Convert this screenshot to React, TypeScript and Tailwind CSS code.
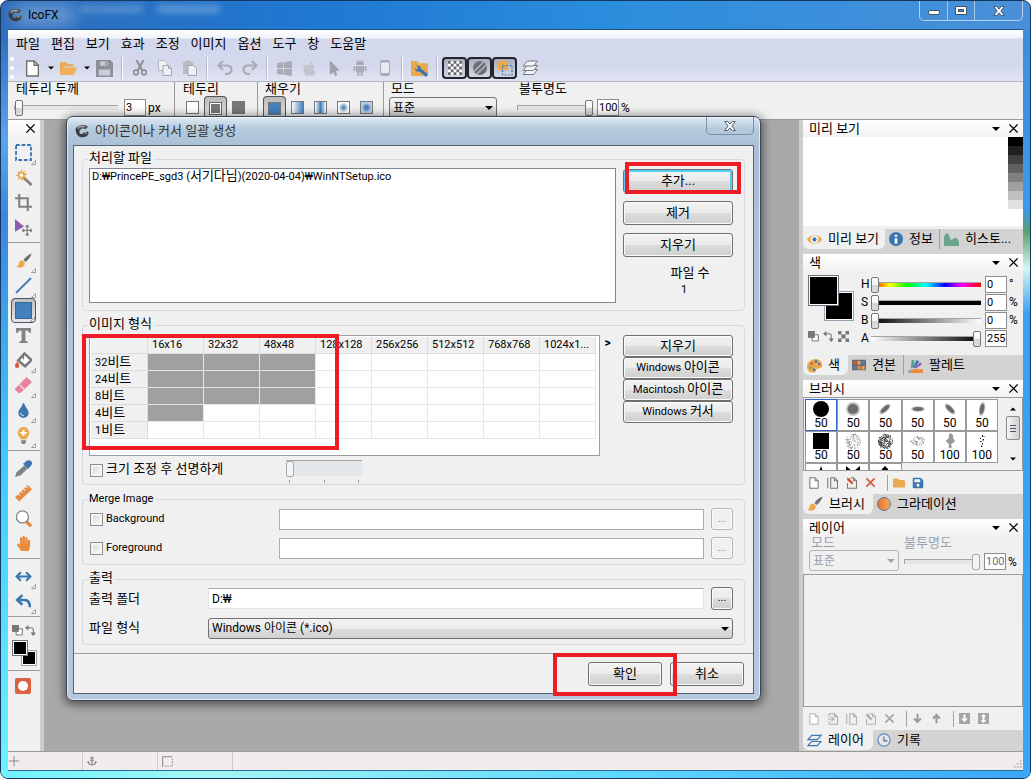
import React from 'react';
import clsx from 'clsx';
import {
  FaAnchor,
  FaApple,
  FaFolder,
  FaHandPaper,
  FaMousePointer,
  FaSave,
  FaTint,
  FaWindows,
} from 'react-icons/fa';

type Children = { children?: React.ReactNode };

// Korean glyphs run one step larger than the Latin ones
const K = ({ children }: Children) => <span className="text-[13px] leading-none">{children}</span>;

const Svg = ({ size = 16, className, children }: { size?: number; className?: string } & Children) => (
  <svg width={size} height={size} viewBox="0 0 16 16" fill="none" className={clsx('shrink-0', className)} aria-hidden>
    {children}
  </svg>
);

/* ---------- icons ---------- */

const Logo = () => (
  <Svg size={14}>
    <path d="M1 4C0 9 2 14 7 15c4 .8 7.500-1 8.500-4.500l-.5-2-5.500 1.500c-.5 2-3 2-4 .5C4.500 8.500 5 6 7.500 5z" fill="#3a3d41" />
    <path d="M1.500 5C4 1 10 0 15 3L12 6C10 4.500 7 4.500 5.500 7.500z" fill="#4f5358" />
    <path d="M3 4.500C5 2 9 1.500 12 2.800L9 4C7 3.500 5 4 3.500 6z" fill="#a7adb3" />
    <path d="M9.500 9.500L14 8.500l-.5 2.500c-1.500.8-3 .5-4-1.500z" fill="#7b8087" />
  </Svg>
);

const NewDoc = ({ size = 16, color = '#6e6e6e' }: { size?: number; color?: string }) => (
  <Svg size={size}>
    <path d="M2.500 1h7l4 4v10h-11z" fill="#fff" stroke={color} strokeWidth="1.300" />
    <path d="M9.500 1v4h4" stroke={color} strokeWidth="1.300" />
  </Svg>
);

const DupDoc = ({ size = 12, color = '#777' }: { size?: number; color?: string }) => (
  <Svg size={size}>
    <path d="M1 1v14M5 1h5l4 4v10H5zM10 1v4h4" stroke={color} strokeWidth="1.400" />
  </Svg>
);

const EditDoc = ({ size = 12, color = '#777', accent = '#d9583b' }: { size?: number; color?: string; accent?: string }) => (
  <Svg size={size}>
    <path d="M6 1h4l4 4v10H2V8M10 1v4h4" stroke={color} strokeWidth="1.400" />
    <path d="M1 1l3.500.8L10 8l-2 2-6-5.500z" fill={accent} />
  </Svg>
);

const ImportDoc = () => (
  <Svg size={12}>
    <path d="M3 5V1h7l4 4v10H3v-4M10 1v4h4M1 8h8M6 5l3 3-3 3" stroke="#b0b0b0" strokeWidth="1.500" />
  </Svg>
);

const Cross = ({ size = 11, color = '#000', width = 2 }: { size?: number; color?: string; width?: number }) => (
  <Svg size={size}>
    <path d="M2 2l12 12M14 2L2 14" stroke={color} strokeWidth={width} />
  </Svg>
);

const OpenFolder = () => (
  <Svg size={17}>
    <path d="M0 14V2h6l1.500 2H13v2H4z" fill="#e8a94f" />
    <path d="M3.500 7H16l-3 7H.5z" fill="#eeb15a" />
  </Svg>
);

const Floppy = () => (
  <Svg size={17}>
    <path d="M0 0h13.500L16 2.500V16H0z" fill="#8d8f96" />
    <path d="M4 1.500h7v4H4zM2.500 9h11v5.500h-11z" fill="#c9ccda" />
    <path d="M8.500 2h1.500v3H8.500z" fill="#8d8f96" />
  </Svg>
);

const Scissors = () => (
  <Svg>
    <path d="M4.500 0l6 11M11.500 0l-6 11" stroke="#8f9094" strokeWidth="2" />
    <circle cx="4" cy="12.500" r="2.300" stroke="#8f9094" strokeWidth="1.700" />
    <circle cx="12" cy="12.500" r="2.300" stroke="#8f9094" strokeWidth="1.700" />
  </Svg>
);

const Copy = () => (
  <Svg>
    <path d="M1.500.5h6l3 3v7h-9z" fill="#eef0f6" stroke="#b3b6bf" />
    <path d="M6 5.500h5.500l3 3v7H6z" fill="#eef0f6" stroke="#a2a5ad" />
    <path d="M11.500 5.500v3h3" stroke="#a2a5ad" />
  </Svg>
);

const Paste = () => (
  <Svg>
    <path d="M1 2h2V.5h6V2h2v12H1z" fill="#b9bbc2" />
    <path d="M6 5.500h5.500l3 3v7H6z" fill="#eef0f6" stroke="#a2a5ad" />
  </Svg>
);

const Undo = ({ flip = false }: { flip?: boolean }) => (
  <Svg className={flip ? '-scale-x-100' : undefined}>
    <path d="M6 1L1.500 5.500 6 10M2 5.500h7.500c3 0 5 1.500 5 4s-2 4.500-5 4.500H8" stroke="#a8abb5" strokeWidth="2.200" />
  </Svg>
);

const Android = () => (
  <Svg>
    <path d="M4 5a4 4 0 018 0zM4 6h8v6.500H4zM1.500 6h1.800v5H1.500zM12.700 6h1.800v5h-1.800zM5.500 12.500h1.800V16H5.500zM8.700 12.500h1.800V16H8.700z" fill="#a8abb5" />
    <path d="M5 0l1.300 2M11 0L9.700 2" stroke="#a8abb5" />
  </Svg>
);

const Wrench = () => (
  <Svg size={17}>
    <path d="M0 1h6l1 2h9v12H0z" fill="#e8a94f" />
    <path d="M5 5.500c2-.8 4 0 4.300 2.500L16 13.500 14 16 8 10.800c-2.300.6-4.300-.6-4.500-3l2 1.200L7 7.500z" fill="#3b76b0" />
  </Svg>
);

const Checker = () => (
  <Svg size={14}>
    <rect width="16" height="16" fill="#fff" />
    <path d="M0 0h3.200v3.200H0zM6.400 0h3.200v3.200H6.400zM12.800 0H16v3.200h-3.200zM3.200 3.200h3.200v3.200H3.200zM9.600 3.200h3.200v3.200H9.600zM0 6.400h3.200v3.200H0zM6.400 6.400h3.200v3.200H6.400zM12.800 6.400H16v3.200h-3.200zM3.200 9.600h3.200v3.200H3.200zM9.600 9.600h3.200v3.200H9.600zM0 12.800h3.200V16H0zM6.400 12.800h3.200V16H6.400zM12.800 12.800H16V16h-3.200z" fill="#696b70" />
  </Svg>
);

const Hatch = () => (
  <Svg>
    <circle cx="8" cy="8" r="7" fill="#6d6f75" />
    <path d="M1 12.500L12.500 1M4 15L15 4" stroke="#b6bac6" strokeWidth="1.300" />
  </Svg>
);

const Overlap = () => (
  <Svg>
    <rect x="1" y="1" width="10" height="9" fill="#e8a94f" />
    <rect x="5.500" y="5.500" width="9.500" height="9.500" stroke="#3b76b0" strokeWidth="1.200" strokeDasharray="2 1.500" />
  </Svg>
);

const Stack = () => (
  <Svg>
    <path d="M5.500 9.500h10l-4 5H1z" fill="#f4f5fa" stroke="#77797f" />
    <path d="M5.500 5.500h10l-4 5H1z" fill="#f4f5fa" stroke="#77797f" />
    <path d="M5.500 1h10l-4 5H1z" fill="#f4f5fa" stroke="#77797f" />
  </Svg>
);

const Layers = ({ color }: { color: string }) => (
  <Svg size={15}>
    <path d="M5 2.500h10L11 7H1zM5 9h10l-4 4.500H1z" stroke={color} strokeWidth="1.200" />
  </Svg>
);

const Brush = () => (
  <Svg>
    <path d="M15.500.5c-3 .8-6.500 4-8 6.500l2 2C12 7.500 15 3.500 15.500.5z" fill="#6f7175" />
    <path d="M6.500 7.500c-3-.5-3.500 2-4 4C2 13 1 13.500 0 13.500c3 2 8 1.500 8.800-2.500.2-1.500-1-3-2.300-3.500z" fill="#e8a94f" />
  </Svg>
);

const Palette = () => (
  <Svg size={15}>
    <path d="M9 1C4 1 0 5 0 9.500 0 14 4 16 8 15.500c2-.3 1-3 2.500-4s5 .5 5.500-3C16.500 4 13 1 9 1z" fill="#e8a94f" />
    <circle cx="5" cy="6" r="1.500" fill="#d9583b" />
    <circle cx="9.500" cy="3.800" r="1.500" fill="#3b76b0" />
    <circle cx="13" cy="6.500" r="1.400" fill="#8a5fae" />
    <circle cx="3.800" cy="10.500" r="1.500" fill="#6aa58c" />
    <circle cx="7.500" cy="12.500" r="1.300" fill="#3b76b0" />
  </Svg>
);

const Defaults = () => (
  <Svg size={11}>
    <path d="M6 5.500h9v9H6z" fill="#fff" stroke="#707070" strokeWidth="1.400" />
    <path d="M0 0h10v10H0z" fill="#777" />
  </Svg>
);

const Swap = () => (
  <Svg size={11}>
    <path d="M5 0v8L0 4zM8 11h8l-4 5z" fill="#777" />
    <path d="M4 4h5c2 0 3 1 3 3v5" stroke="#777" strokeWidth="1.500" />
  </Svg>
);

const MiniChecker = () => (
  <Svg size={11}>
    <path d="M0 0h5v5H0zM11 0h5v5h-5zM5 5h6v6H5zM0 11h5v5H0zM11 11h5v5h-5z" fill="#777" />
  </Svg>
);

const Arrow = ({ up = false }: { up?: boolean }) => (
  <Svg size={11} className={up ? 'rotate-180' : undefined}>
    <path d="M8 1v12M3 8l5 5 5-5" stroke="#9b9b9b" strokeWidth="3" />
  </Svg>
);

const MergeBox = ({ both = false }: { both?: boolean }) => (
  <Svg size={11}>
    <path d="M0 0h16v16H0z" fill="#a5a5a5" />
    <path d={both ? 'M8 1l4 4.500H9.500v5H12L8 15l-4-4.500h2.500v-5H4z' : 'M6.500 2h3v6H13l-5 5.500L3 8h3.500z'} fill="#fff" />
  </Svg>
);

/* ---------- left tool strip ---------- */

const toolIcons: Record<string, React.ReactNode> = {
  marquee: (
    <Svg size={17}>
      <rect x="1" y="1" width="14" height="14" stroke="#3b76b0" strokeWidth="1.800" strokeDasharray="3.500 1.700" />
    </Svg>
  ),
  wand: (
    <Svg size={17}>
      <path d="M6.500 6.500L15.500 15" stroke="#808285" strokeWidth="2.600" />
      <path d="M6 0l1 3 2.500-2-.8 3L12 4.500 9 6.500 11.500 9 8 8.500 6.500 12l-1-3.500L2.500 10l1-3L0 6l3.500-1L2 2l3 1z" fill="#e8a94f" />
      <circle cx="6" cy="5.800" r="1.600" fill="#fff" />
    </Svg>
  ),
  crop: (
    <Svg size={17}>
      <path d="M4 0v12h12M0 4h12v12" stroke="#808285" strokeWidth="2" />
    </Svg>
  ),
  move: (
    <Svg size={17}>
      <path d="M0 0l8.500 7L0 12z" fill="#8a5fae" />
      <path d="M11.500 6v9.500M7 10.800h9M10 7.500L11.500 6 13 7.500M10 14l1.500 1.500L13 14M8.500 9.300L7 10.800l1.500 1.500M14.500 9.300l1.500 1.500-1.500 1.500" stroke="#808285" strokeWidth="1.200" />
    </Svg>
  ),
  brush: <Brush />,
  line: (
    <Svg size={17}>
      <path d="M1 15L15 1" stroke="#3b76b0" strokeWidth="1.800" />
    </Svg>
  ),
  rect: (
    <Svg size={17}>
      <rect x=".5" y=".5" width="15" height="15" fill="#4480bb" stroke="#34689c" />
    </Svg>
  ),
  text: (
    <Svg size={17}>
      <path d="M1 1h14v4.500h-2L12.500 3.500H9.800V13l2.200.8V15H4v-1.200l2.200-.8V3.500H3.500L3 5.500H1z" fill="#808285" />
    </Svg>
  ),
  bucket: (
    <Svg size={17}>
      <path d="M9 1.500l6.500 6-6 6L3 8z" fill="#fff" stroke="#77797c" strokeWidth="2.400" />
      <path d="M8 1v6" stroke="#77797c" strokeWidth="1.200" />
      <path d="M2 9c1.500 2 2 3 2 4.200A2 2 0 010 13c0-1.200 1-2.500 2-4z" fill="#d9583b" />
    </Svg>
  ),
  eraser: (
    <Svg size={17}>
      <path d="M0 11L11 0l5 5L5 15H3.500L0 12z" fill="#e8829b" />
      <path d="M4 7l5 5" stroke="#f7d4dc" strokeWidth="1.200" />
    </Svg>
  ),
  blur: <FaTint size={15} color="#3b76b0" />,
  dodge: (
    <Svg size={17}>
      <path d="M8 0a5.500 5.500 0 00-3 10v1.500h6V10A5.500 5.500 0 008 0z" fill="#e8a94f" />
      <path d="M8 2.500v6M5 5.500h6" stroke="#fff" strokeWidth="1.800" />
      <path d="M5.500 12.500h5L9.500 16h-3z" fill="#808285" />
    </Svg>
  ),
  picker: (
    <Svg size={17}>
      <path d="M9 5l3 3-7 6.500-5 1.500 1.500-4.500z" fill="#808285" />
      <path d="M7.500 3.500l5 5 1-1.500C16 5 17 2.500 15 1s-4-.5-5.500 1z" fill="#3b76b0" />
    </Svg>
  ),
  ruler: (
    <Svg size={17}>
      <path d="M0 11.500L12 0l4 4L4 15.500z" fill="#e88b3e" />
      <path d="M3 8.500l1.500 1.500M5.500 6L7 7.500M8 3.800l1.500 1.500M10.500 1.500L12 3" stroke="#f0f0f0" />
    </Svg>
  ),
  zoom: (
    <Svg size={17}>
      <path d="M10.500 10.500l4.500 5" stroke="#e88b3e" strokeWidth="3.200" />
      <circle cx="7" cy="6.500" r="5.700" fill="#fff" stroke="#808285" strokeWidth="1.200" />
    </Svg>
  ),
  hand: <FaHandPaper size={15} color="#e88b3e" />,
  flip: (
    <Svg size={17}>
      <path d="M2 8h12M5.500 4L1.500 8l4 4M10.500 4l4 4-4 4" stroke="#3b76b0" strokeWidth="2" />
    </Svg>
  ),
  rotate: (
    <Svg size={17}>
      <path d="M7 2L2 6.500 7 11M2 6.500h7c3.500 0 5 2 5 7" stroke="#3b76b0" strokeWidth="2.400" />
    </Svg>
  ),
};

const toolGroups = [
  [['marquee', true], ['wand'], ['crop'], ['move']],
  [['brush', true], ['line', true], ['rect', true], ['text'], ['bucket', true], ['eraser', true], ['blur', true], ['dodge', true]],
  [['picker'], ['ruler'], ['zoom'], ['hand']],
  [['flip', true], ['rotate', true]],
] as [string, boolean?][][];

const ToolSep = () => (
  <div className="h-2 pt-0.5">
    <div className="h-px bg-[#9c9c9c]" />
  </div>
);

const Swatches = ({ big = false }: { big?: boolean }) => (
  <div className={clsx('relative shrink-0', big ? 'size-[46px]' : 'h-[26px] w-[25px]')}>
    <div className={clsx('absolute right-0 bottom-0 border border-gray-400 bg-white p-px', big ? 'size-[30px]' : 'size-4')}>
      <div className="size-full bg-black" />
    </div>
    <div className={clsx('absolute top-0 left-0 border border-gray-500 bg-white p-px', big ? 'size-[31px]' : 'size-4')}>
      <div className="size-full bg-black" />
    </div>
  </div>
);

const ToolStrip = () => (
  <div className="w-9 shrink-0 border-r-4 border-[#cdcdcd] bg-[#f0f0f0]">
    <div className="flex h-5 items-center justify-end bg-linear-to-b from-white to-[#f0f0f0] pr-1 pb-1">
      <button aria-label="닫기"><Cross /></button>
    </div>
    {toolGroups.map((group, i) => (
      <div key={i}>
        {group.map(([name, more]) => (
          <button
            key={name}
            aria-label={name}
            className={clsx(
              'relative mx-[3px] flex h-[25px] w-[25px] items-center justify-center',
              name === 'rect' && 'rounded border border-gray-600 bg-linear-to-b from-[#bfbfbf] to-[#e8e8e8]',
            )}
          >
            {toolIcons[name]}
            {more && (
              <svg width="5" height="5" viewBox="0 0 5 5" className="absolute right-0 bottom-0">
                <path d="M4.500.5v4h-4z" fill="#fff" stroke="#888" strokeWidth=".8" />
              </svg>
            )}
          </button>
        ))}
        <ToolSep />
      </div>
    ))}
    <div className="flex h-4 items-center justify-between px-1">
      <button aria-label="기본 색"><Defaults /></button>
      <button aria-label="색 전환"><Swap /></button>
    </div>
    <div className="px-1 py-0.5"><Swatches /></div>
    <ToolSep />
    <button aria-label="마스크" className="mx-[7px] mt-0.5 flex size-4 items-center justify-center rounded-xs bg-[#d9613f]">
      <span className="size-2.5 rounded-full bg-white" />
    </button>
  </div>
);

/* ---------- shared controls ---------- */

const btn =
  'flex items-center justify-center rounded-[3px] border border-[#707070] bg-[linear-gradient(#f2f2f2,#ebebeb_50%,#dddddd_50%,#cfcfcf)] text-black inset-shadow-[0_0_0_1px_#fafafa] disabled:border-[#b5b5b5] disabled:bg-none disabled:text-[#8c8c8c]';

const thumb =
  '[&::-webkit-slider-thumb]:appearance-none [&::-webkit-slider-thumb]:w-2 [&::-webkit-slider-thumb]:h-4 [&::-webkit-slider-thumb]:-mt-[6px] [&::-webkit-slider-thumb]:rounded-[2px] [&::-webkit-slider-thumb]:border [&::-webkit-slider-thumb]:border-[#777] [&::-webkit-slider-thumb]:bg-[linear-gradient(#fff,#f4f4f4_50%,#d5d5d5_50%,#dcdcdc)] disabled:[&::-webkit-slider-thumb]:border-[#aaa] disabled:[&::-webkit-slider-thumb]:bg-none disabled:[&::-webkit-slider-thumb]:bg-[#f4f4f4]';

const track =
  '[&::-webkit-slider-runnable-track]:h-[5px] [&::-webkit-slider-runnable-track]:border-t [&::-webkit-slider-runnable-track]:border-[#a5a5a5]';

const plainTrack = '[&::-webkit-slider-runnable-track]:border-l [&::-webkit-slider-runnable-track]:bg-[#e4e6e8]';

const Slider = ({ label, className, ...rest }: { label: string } & React.InputHTMLAttributes<HTMLInputElement>) => (
  <input type="range" aria-label={label} className={clsx('m-0 h-4 appearance-none bg-transparent', thumb, track, className)} {...rest} />
);

const Num = ({ label, value, disabled }: { label: string; value: string; disabled?: boolean }) => (
  <input
    aria-label={label}
    defaultValue={value}
    disabled={disabled}
    className="h-[17px] w-[22px] shrink-0 border border-[#8d8d8d] bg-white pl-px text-[11px] disabled:text-gray-500"
  />
);

const Caret = ({ className }: { className?: string }) => (
  <svg width="8" height="4" viewBox="0 0 8 4" className={clsx('shrink-0', className)} aria-hidden>
    <path d="M0 0h8L4 4z" fill="currentColor" />
  </svg>
);

const Select = ({ value, className, disabled, id, label }: { value: string; className?: string; disabled?: boolean; id?: string; label?: string }) => (
  <div className={clsx('relative', className, disabled && 'text-gray-400')}>
    <select
      id={id}
      aria-label={label}
      disabled={disabled}
      className={clsx(
        'h-[21px] w-full appearance-none rounded-[3px] border pr-5 pl-[3px] text-xs',
        disabled ? 'border-[#b5b5b5]' : 'border-[#707070] bg-[linear-gradient(#f2f2f2,#ebebeb_50%,#dddddd_50%,#d2d2d2)]',
      )}
    >
      <option>{value}</option>
    </select>
    <Caret className="pointer-events-none absolute top-[9px] right-1" />
  </div>
);

/* ---------- top bars ---------- */

const WinX = () => (
  <Svg size={12}>
    <path d="M1 2h4l3 3.500L11 2h4l-4.500 6 4.500 6h-4l-3-3.500L5 14H1l4.500-6z" fill="#fff" stroke="#44505e" strokeWidth="1.200" />
  </Svg>
);

const TitleBar = () => (
  <header className="relative flex h-7 shrink-0 items-center text-xs">
    <div className="absolute top-1 left-[72px] h-2 w-16 rounded-full bg-white/20 blur-[3px]" />
    <div className="absolute top-1 left-[148px] h-2 w-16 rounded-full bg-white/25 blur-[3px]" />
    <div className="absolute top-1 left-1 h-5 w-16 rounded-full bg-white/30 blur-sm" />
    <div className="relative flex items-center gap-1.5">
      <Logo />
      <h1 className="text-black">IcoFX</h1>
    </div>
    <div className="ml-auto flex h-5 self-start rounded-b-[5px] border border-t-0 border-white/60">
      <button aria-label="최소화" className="flex w-7 items-center justify-center border-r border-white/50 pt-1">
        <span className="h-[5px] w-3 rounded-xs border border-[#44505e] bg-white" />
      </button>
      <button aria-label="최대화" className="flex w-[27px] items-center justify-center border-r border-white/50">
        <span className="flex h-[9px] w-3 items-center justify-center border border-[#44505e] bg-white">
          <span className="h-[3px] w-1.5 border border-[#44505e] bg-[#3f8fd9]" />
        </span>
      </button>
      <button aria-label="닫기" className="flex w-[47px] items-center justify-center"><WinX /></button>
    </div>
  </header>
);

const menus = ['파일', '편집', '보기', '효과', '조정', '이미지', '옵션', '도구', '창', '도움말'];

const BarSep = () => (
  <div className="flex w-2.5 shrink-0 justify-center">
    <div className="h-[22px] w-0.5 border-l border-[#b4b8c8] bg-white" />
  </div>
);

const BarBtn = ({ label, on, children }: { label: string; on?: boolean } & Children) => (
  <button
    aria-label={label}
    className={clsx(
      'flex h-[22px] w-[25px] shrink-0 items-center justify-center',
      on && 'rounded border-2 border-[#22252b] bg-linear-to-b from-[#a9aebd] to-[#d3d8e6]',
    )}
  >
    {children}
  </button>
);

const MenuAndToolbar = () => (
  <div className="h-[53px] shrink-0 border-t border-b border-t-[#1c4f86] border-b-[#b2b5be] bg-[linear-gradient(#ffffff,#eff2f8_8px,#d4d8ec_9px,#d4d8ec_36px,#dfe4f2)]">
    <nav className="flex h-[27px] items-center gap-[11px] px-2 text-[13px]">
      {menus.map((m) => (
        <button key={m}>{m}</button>
      ))}
    </nav>
    <div className="flex h-[22px] items-center pl-0.5">
      <div className="mr-1.5 h-[22px] border-l-4 border-dotted border-white" />
      <BarBtn label="새로 만들기"><NewDoc size={17} /></BarBtn>
      <button aria-label="새로 만들기 메뉴" className="flex w-[11px] justify-center"><Caret className="w-1.5" /></button>
      <BarBtn label="열기"><OpenFolder /></BarBtn>
      <button aria-label="열기 메뉴" className="flex w-[11px] justify-center"><Caret className="w-1.5" /></button>
      <BarBtn label="저장"><Floppy /></BarBtn>
      <BarSep />
      <BarBtn label="잘라내기"><Scissors /></BarBtn>
      <BarBtn label="복사"><Copy /></BarBtn>
      <BarBtn label="붙여넣기"><Paste /></BarBtn>
      <BarSep />
      <BarBtn label="실행 취소"><Undo /></BarBtn>
      <BarBtn label="다시 실행"><Undo flip /></BarBtn>
      <BarSep />
      <BarBtn label="Windows"><FaWindows size={17} color="#a8abb5" /></BarBtn>
      <BarBtn label="Macintosh"><FaApple size={17} color="#c3c6d0" /></BarBtn>
      <BarBtn label="커서"><FaMousePointer size={15} color="#a0a3ad" /></BarBtn>
      <BarBtn label="Android"><Android /></BarBtn>
      <BarBtn label="iOS">
        <Svg>
          <rect x="3.500" y=".5" width="9" height="15" rx="1.500" fill="#e9ebf2" stroke="#a8abb5" />
          <path d="M4 1h8v1.500H4zM4 13h8v2H4z" fill="#a8abb5" />
        </Svg>
      </BarBtn>
      <BarSep />
      <BarBtn label="설정"><Wrench /></BarBtn>
      <BarSep />
      <BarBtn label="투명 격자" on><Checker /></BarBtn>
      <BarBtn label="빗금" on><Hatch /></BarBtn>
      <BarBtn label="선택 영역" on><Overlap /></BarBtn>
      <BarBtn label="레이어"><Stack /></BarBtn>
    </div>
  </div>
);

const OptGroup = ({ title, className, children }: { title: string; className: string } & Children) => (
  <div className={clsx('h-[37px] shrink-0', className)}>
    <div className="h-3.5 pl-0.5 text-[13px] leading-[14px]">{title}</div>
    <div className="flex h-[23px] items-center">{children}</div>
  </div>
);

const fills = [
  'bg-[#4480bb]',
  'bg-linear-to-r from-white to-[#4480bb]',
  'bg-[linear-gradient(90deg,#fff,#4480bb,#fff)]',
  'bg-[radial-gradient(#4480bb_5%,#fff_65%)]',
  'bg-[radial-gradient(#4480bb_20%,#b8d0e8_60%)]',
];

const pressed = 'rounded border border-b-0 border-[#555] bg-linear-to-b from-[#b9b9b9] to-[#ececec]';

const OptionsBar = () => (
  <div className="flex h-[38px] shrink-0 border-b border-[#9a9a9a] bg-[#f0f0f0] text-xs">
    <OptGroup title="테두리 두께" className="w-[166px] pl-1.5">
      <Slider label="테두리 두께" defaultValue={0} className={clsx('mr-1.5 w-[104px]', plainTrack)} />
      <Num label="두께" value="3" />
      <span className="pl-0.5">px</span>
    </OptGroup>
    <OptGroup title="테두리" className="w-[83px] border-l border-[#999] pl-1.5">
      <button aria-label="없음" className="flex w-[23px] justify-center"><span className="size-[13px] border border-[#777] bg-white" /></button>
      <button aria-label="테두리와 채우기" className={clsx('flex size-[23px] items-center justify-center', pressed)}>
        <span className="size-[13px] border border-[#666] bg-white p-px"><span className="block size-full bg-[#777]" /></span>
      </button>
      <button aria-label="채우기만" className="flex w-[23px] justify-center"><span className="size-[13px] bg-[#777]" /></button>
    </OptGroup>
    <OptGroup title="채우기" className="w-[126px] border-l border-[#999] pl-[5px]">
      {fills.map((f, i) => (
        <button key={f} aria-label={`채우기 ${i + 1}`} className={clsx('flex h-[23px] w-[23px] items-center justify-center', i === 0 && pressed)}>
          <span className={clsx('size-[13px] border border-[#777]', f)} />
        </button>
      ))}
    </OptGroup>
    <OptGroup title="모드" className="w-[126px] border-l border-[#999] pl-[5px]">
      <Select value="표준" label="모드" className="w-[108px]" />
    </OptGroup>
    <OptGroup title="불투명도" className="pl-2">
      <Slider label="불투명도" defaultValue={100} className={clsx('mr-1 w-[76px]', plainTrack)} />
      <Num label="불투명도 값" value="100" />
      <span className="pl-0.5">%</span>
    </OptGroup>
  </div>
);

/* ---------- right side panels ---------- */

const PanelHead = ({ title }: { title: string }) => (
  <div className="flex h-[17px] shrink-0 items-center bg-linear-to-b from-white to-[#f2f2f2] pr-1 pl-1.5">
    <h2 className="text-[13px] leading-4">{title}</h2>
    <button aria-label={`${title} 메뉴`} className="ml-auto"><Caret /></button>
    <button aria-label={`${title} 닫기`} className="ml-2"><Cross /></button>
  </div>
);

type Tab = { icon: React.ReactNode; text: string; width: string };

const Tabs = ({ items }: { items: Tab[] }) => (
  <div className="flex h-[25px] shrink-0 bg-[#d3d3d3] pb-[5px]">
    {items.map((t, i) => (
      <button
        key={t.text}
        className={clsx(
          'flex items-center gap-1.5 overflow-hidden pl-1 text-[13px] leading-4 whitespace-nowrap',
          t.width,
          i === 0 && 'rounded-b-md bg-[#f0f0f0]',
          i === 2 && 'border-l border-gray-400',
        )}
      >
        {t.icon}
        {t.text}
      </button>
    ))}
  </div>
);

const greys = ['bg-[#000]', 'bg-[#202020]', 'bg-[#404040]', 'bg-[#606060]', 'bg-[#808080]', 'bg-[#a0a0a0]', 'bg-[#c0c0c0]', 'bg-[#e0e0e0]'];

const PreviewPanel = () => (
  <section>
    <PanelHead title="미리 보기" />
    <div className="flex h-[92px] justify-end border-b-[3px] border-[#f0f0f0] bg-white">
      <div className="w-[15px]">
        {greys.map((g) => (
          <div key={g} className={clsx('h-[9px]', g)} />
        ))}
      </div>
    </div>
    <Tabs
      items={[
        {
          icon: (
            <Svg size={15}>
              <path d="M0 8c4-6 12-6 16 0-4 6-12 6-16 0z" fill="#e8a94f" />
              <circle cx="8" cy="8" r="4" fill="#fff" />
              <circle cx="8" cy="8" r="2.300" fill="#3b76b0" />
            </Svg>
          ),
          text: '미리 보기',
          width: 'w-[82px]',
        },
        {
          icon: (
            <Svg size={14}>
              <circle cx="8" cy="8" r="8" fill="#3b76b0" />
              <path d="M6.500 7h3v6h-3zM6.500 3h3v2.500h-3z" fill="#fff" />
            </Svg>
          ),
          text: '정보',
          width: 'w-[54px]',
        },
        {
          icon: (
            <Svg size={15}>
              <path d="M0 15V5c2-6 5-4 6 0 1 4 2 4 4 2s5 0 6 3v5z" fill="#6aa58c" />
            </Svg>
          ),
          text: '히스토...',
          width: 'w-[84px]',
        },
      ]}
    />
  </section>
);

const channels = [
  { name: 'H', unit: '°', value: '0', pos: 0, bar: '[&::-webkit-slider-runnable-track]:bg-[linear-gradient(90deg,#f00,#ff0_17%,#0f0_33%,#0ff_50%,#00f_67%,#f0f_83%,#f00)]' },
  { name: 'S', unit: '%', value: '0', pos: 0, bar: '[&::-webkit-slider-runnable-track]:bg-black' },
  { name: 'B', unit: '%', value: '0', pos: 0, bar: '[&::-webkit-slider-runnable-track]:bg-[linear-gradient(90deg,#000,#fff)]' },
  { name: 'A', unit: '', value: '255', pos: 100, bar: '[&::-webkit-slider-runnable-track]:bg-[linear-gradient(90deg,#fff,#000)]' },
];

const ColorPanel = () => (
  <section>
    <PanelHead title="색" />
    <div className="flex h-[84px] pt-1 pl-[5px]">
      <div className="w-[53px] shrink-0">
        <Swatches big />
        <div className="flex gap-1 pt-2.5">
          <button aria-label="기본 색"><Defaults /></button>
          <button aria-label="색 전환"><Swap /></button>
          <button aria-label="투명"><MiniChecker /></button>
        </div>
      </div>
      <div className="text-xs">
        {channels.map((c) => (
          <div key={c.name} className="flex h-[18px] items-center">
            <span className="w-2.5">{c.name}</span>
            <Slider label={c.name} defaultValue={c.pos} className={clsx('mr-1 w-[110px]', c.bar)} />
            <Num label={`${c.name} 값`} value={c.value} />
            <span className="pl-0.5">{c.unit}</span>
          </div>
        ))}
      </div>
    </div>
    <Tabs
      items={[
        { icon: <Palette />, text: '색', width: 'w-[45px]' },
        {
          icon: (
            <Svg size={14}>
              <path d="M0 2h16v12H0z" fill="#6b6b6b" />
              <path d="M1.500 3.500h3.500v4H1.500z" fill="#d9583b" />
              <path d="M6.300 3.500h3.500v4H6.300zM11 9h3.500v4H11z" fill="#e8a94f" />
              <path d="M11 3.500h3.500v4H11zM1.500 9h3.500v4H1.500z" fill="#4480bb" />
              <path d="M6.300 9h3.500v4H6.300z" fill="#e88b3e" />
            </Svg>
          ),
          text: '견본',
          width: 'w-[55px]',
        },
        {
          icon: (
            <Svg size={15}>
              <path d="M3 12h13v4H3z" fill="#e88b3e" />
              <path d="M3 11L4 2l3 .5-1 7z" fill="#4fa08a" />
              <path d="M5 11l4-9 3 1.500-4 6z" fill="#3b76b0" />
              <path d="M6 11l7-6.500 2 2L9 11z" fill="#8a5fae" />
              <circle cx="1.500" cy="14.500" r="1" stroke="#777" />
            </Svg>
          ),
          text: '팔레트',
          width: 'w-[80px]',
        },
      ]}
    />
  </section>
);

// cheap repeatable noise, 0..1
const noise = (n: number) => {
  const v = Math.sin(n * 127.1) * 43758.5453;
  return v - Math.floor(v);
};

const Specks = ({ n, r, seed, color, flat = 1 }: { n: number; r: number; seed: number; color: string; flat?: number }) => (
  <Svg>
    {Array.from({ length: n }, (_, i) => {
      const a = noise(i + seed) * Math.PI * 2;
      const d = r * Math.sqrt(noise(i * 3 + seed + 50));
      return <rect key={i} x={8 + d * Math.cos(a)} y={8 + d * Math.sin(a) * flat} width=".8" height=".8" fill={color} />;
    })}
  </Svg>
);

const Blob = ({ rx, ry, turn = 0 }: { rx: number; ry: number; turn?: number }) => (
  <Svg>
    <ellipse cx="8" cy="8" rx={rx} ry={ry} fill="#888" opacity=".5" transform={`rotate(${turn} 8 8)`} />
    <ellipse cx="8" cy="8" rx={rx * 0.75} ry={ry * 0.7} fill="#555" opacity=".8" transform={`rotate(${turn} 8 8)`} />
  </Svg>
);

const brushes: { mark: React.ReactNode; size: string }[] = [
  { mark: <Svg><circle cx="8" cy="8" r="8" fill="#000" /></Svg>, size: '50' },
  { mark: <Blob rx={7} ry={7} />, size: '50' },
  { mark: <Blob rx={7} ry={3} turn={-42} />, size: '50' },
  { mark: <Blob rx={7} ry={2.8} />, size: '50' },
  { mark: <Blob rx={7} ry={3} turn={45} />, size: '50' },
  { mark: <Blob rx={7} ry={3} turn={-80} />, size: '50' },
  { mark: <Svg><rect width="16" height="16" fill="#000" /></Svg>, size: '50' },
  { mark: <Specks n={90} r={8} seed={3} color="#777" />, size: '50' },
  { mark: <Specks n={190} r={7.5} seed={5} color="#222" />, size: '50' },
  { mark: <Specks n={60} r={8} seed={2} color="#777" flat={0.6} />, size: '50' },
  {
    mark: (
      <Svg>
        <path d="M8 0c3 1 4 3 3 5l2 3c-2 3-4 2-4 4 2 2 0 4-2 3-1-2 1-3-1-5-2-1-3-3 0-4 2-2 0-4 2-6z" fill="#999" />
      </Svg>
    ),
    size: '100',
  },
  {
    mark: (
      <Svg>
        <path d="M8 2h1v2H8zM6 5h1v1H6zM8.500 6H10v1.500H8.500zM6 8h1.500v1H6zM8 10h1v1.500H8zM7 12.500h1.300V14H7zM9.500 3h1v1h-1z" fill="#222" />
      </Svg>
    ),
    size: '100',
  },
];

const IconRow = ({ children, label }: { label: string } & Children) => (
  <div role="toolbar" aria-label={label} className="flex h-[23px] shrink-0 items-center pl-1">{children}</div>
);

const Small = ({ label, children }: { label: string } & Children) => (
  <button aria-label={label} className="flex w-[19px] justify-center pr-1.5">{children}</button>
);

const SmallSep = () => <div className="mr-1 ml-1 h-4 w-px bg-gray-400" />;

const BrushPanel = () => (
  <section>
    <PanelHead title="브러시" />
    <div className="flex h-[74px] border border-[#9a9a9a] p-px">
      <div className="grid h-[71px] w-[193px] grid-cols-6 content-start overflow-hidden">
        {brushes.map((b, i) => (
          <button
            key={i}
            className={clsx('flex h-8 flex-col items-center border bg-white pt-px text-xs leading-[13px]', i === 0 ? 'border-[#2f62c9]' : 'border-[#9a9a9a]')}
          >
            {b.mark}
            {b.size}
          </button>
        ))}
        {[0, 1, 2].map((i) => (
          <button key={i} aria-label={`브러시 ${i + 13}`} className="flex h-8 justify-center border border-[#9a9a9a] bg-white pt-0.5">
            <Svg>
              <path d={['M8 0l2 6H6z', 'M1 0l6 5H1zM15 0v5H9z', 'M8 0l3 3v4H5V3z'][i]} fill="#000" />
            </Svg>
          </button>
        ))}
      </div>
      <div className="ml-auto flex w-4 flex-col items-center justify-between py-2">
        <Caret className="w-1.5 rotate-180" />
        <div className="mb-3 flex h-6 w-3.5 flex-col items-center justify-center gap-0.5 rounded-xs border border-[#8a8a8a] bg-linear-to-r from-[#f5f5f5] to-[#cfcfcf]">
          <span className="h-px w-1.5 bg-gray-600" />
          <span className="h-px w-1.5 bg-gray-600" />
          <span className="h-px w-1.5 bg-gray-600" />
        </div>
        <Caret className="w-1.5" />
      </div>
    </div>
    <IconRow label="브러시 도구">
      <Small label="새 브러시"><NewDoc size={12} /></Small>
      <Small label="복제"><DupDoc /></Small>
      <Small label="편집"><EditDoc /></Small>
      <Small label="삭제"><Cross color="#d9583b" width={2.5} /></Small>
      <SmallSep />
      <Small label="열기"><FaFolder size={12} color="#e8a94f" /></Small>
      <Small label="저장"><FaSave size={12} color="#3b76b0" /></Small>
    </IconRow>
    <Tabs
      items={[
        { icon: <Brush />, text: '브러시', width: 'w-[70px]' },
        {
          icon: <span className="size-3.5 shrink-0 rounded-full border border-gray-500 bg-linear-to-r from-[#e8703e] to-[#f0aa5a]" />,
          text: '그라데이션',
          width: 'w-[100px]',
        },
      ]}
    />
  </section>
);

const LayerPanel = () => (
  <section className="flex min-h-0 flex-1 flex-col">
    <PanelHead title="레이어" />
    <div className="flex h-[38px] shrink-0 text-xs text-gray-400">
      <div className="w-[99px] pl-1.5">
        <div className="h-3.5 pl-0.5 text-[13px] leading-[13px]">모드</div>
        <Select value="표준" label="레이어 모드" disabled className="w-[90px]" />
      </div>
      <div>
        <div className="h-3.5 pl-0.5 text-[13px] leading-[13px]">불투명도</div>
        <div className="flex h-[23px] items-center">
          <Slider label="레이어 불투명도" defaultValue={100} disabled className={clsx('mr-1 ml-0.5 w-[76px]', plainTrack)} />
          <Num label="레이어 불투명도 값" value="100" disabled />
          <span className="pl-0.5 text-black">%</span>
        </div>
      </div>
    </div>
    <div className="min-h-0 flex-1 border border-[#9a9a9a]" />
    <IconRow label="레이어 도구">
      <Small label="새 레이어"><NewDoc size={12} color="#b0b0b0" /></Small>
      <Small label="가져오기"><ImportDoc /></Small>
      <Small label="레이어 복제"><DupDoc color="#b0b0b0" /></Small>
      <Small label="레이어 편집"><EditDoc color="#b0b0b0" accent="#b0b0b0" /></Small>
      <Small label="레이어 삭제"><Cross color="#a5a5a5" width={2.5} /></Small>
      <SmallSep />
      <Small label="아래로"><Arrow /></Small>
      <Small label="위로"><Arrow up /></Small>
      <SmallSep />
      <Small label="병합"><MergeBox /></Small>
      <Small label="모두 병합"><MergeBox both /></Small>
    </IconRow>
    <div className="-mb-1">
      <Tabs
        items={[
          { icon: <Layers color="#3b76b0" />, text: '레이어', width: 'w-[70px]' },
          {
            icon: (
              <Svg size={14}>
                <circle cx="8" cy="8" r="7" fill="#e3e8ee" stroke="#5b8cbd" strokeWidth="1.300" />
                <path d="M8 4v5h4" stroke="#666" strokeWidth="1.300" />
              </Svg>
            ),
            text: '기록',
            width: 'w-[60px]',
          },
        ]}
      />
    </div>
  </section>
);

/* ---------- batch dialog ---------- */

const Group = ({ title, className, children }: { title: React.ReactNode; className?: string } & Children) => (
  <fieldset className={clsx('min-w-0 rounded border border-[#d0dbe4] pr-[11px] pl-1.5', className)}>
    <legend className="h-4 pr-0.5 leading-4">{title}</legend>
    {children}
  </fieldset>
);

const columns = ['16x16', '32x32', '48x48', '128x128', '256x256', '512x512', '768x768', '1024x1...'];
const rows = [
  { bits: '32', on: 3 },
  { bits: '24', on: 3 },
  { bits: '8', on: 3 },
  { bits: '4', on: 1 },
  { bits: '1', on: 0 },
];

const FormatGrid = () => (
  <div className="h-[121px] w-[511px] border border-[#9a9da3] bg-white p-px">
    <table className="w-[505px] table-fixed border-separate border-spacing-0 text-left">
      <thead>
        <tr className="h-[17px] bg-[#f0f0f0]">
          <th className="w-[57px] border-r border-b border-[#dcdcdc] p-0" />
          {columns.map((c) => (
            <th key={c} className="border-r border-b border-[#dcdcdc] p-0 pl-1 leading-4 font-normal whitespace-nowrap">{c}</th>
          ))}
        </tr>
      </thead>
      <tbody>
        {rows.map((r) => (
          <tr key={r.bits} className="h-[17px]">
            <th className="border-r border-b border-[#dcdcdc] bg-[#f0f0f0] p-0 pl-1 leading-[14px] font-normal">
              {r.bits}
              <K>비트</K>
            </th>
            {columns.map((c, i) => (
              <td key={c} className={clsx('border-r border-b border-[#e6e6e6] p-0', i < r.on && 'bg-[#a0a0a0]')} />
            ))}
          </tr>
        ))}
      </tbody>
    </table>
  </div>
);

const Check = ({ id, children }: { id: string } & Children) => (
  <div className="flex h-4 items-center gap-0.5">
    <input
      id={id}
      type="checkbox"
      className="m-px size-[13px] shrink-0 appearance-none border border-[#8e8f8f] bg-linear-to-br from-[#cfd3d8] to-white inset-shadow-[0_0_0_2px_#f4f4f4] checked:bg-gray-600"
    />
    <label htmlFor={id} className="leading-4">{children}</label>
  </div>
);

const field = 'h-[21px] min-w-0 flex-1 border bg-white px-[3px] text-xs';

const MergeRow = ({ name }: { name: string }) => (
  <div className="flex h-[22px] items-center">
    <div className="w-[190px] shrink-0"><Check id={`merge-${name}`}>{name}</Check></div>
    <input aria-label={`${name} 파일`} className={clsx(field, 'mr-[7px] border-[#a9adb3]')} />
    <button aria-label={`${name} 찾기`} disabled className={clsx(btn, 'h-[22px] w-[22px]')}>...</button>
  </div>
);

const mark = 'pointer-events-none absolute border-4 border-[#ec1c24]';

const BatchDialog = () => (
  <div
    role="dialog"
    aria-labelledby="batch-title"
    className="absolute top-[115px] left-[65px] w-[695px] rounded-[7px] border border-[#3c4652] bg-[linear-gradient(#dfeaf6,#b4cadd_12px,#a9c0d6_29px,#b5c8dd)] px-1.5 pb-1.5 text-[11px] shadow-[0_2px_10px_2px_rgba(0,0,0,.5)] inset-shadow-[0_0_0_1px_rgba(255,255,255,.6)]"
  >
    <div className="flex h-7 items-center gap-1.5 pl-0.5">
      <Logo />
      <h2 id="batch-title" className="text-[13px] leading-4 text-[#333]">아이콘이나 커서 일괄 생성</h2>
      <button aria-label="닫기" className="ml-auto flex h-[18px] w-12 items-center justify-center self-start rounded-b-[5px] border border-t-0 border-[#7d8fa3]">
        <WinX />
      </button>
    </div>
    <div className="border border-[#56616d] bg-[#f0f0f0]">
      <div className="flex flex-col gap-1.5 px-2 pt-[5px] pb-2">
        <Group title={<K>처리할 파일</K>}>
          <div className="flex gap-[7px] pt-px pb-[7px]">
            <ul className="h-[135px] min-w-0 flex-1 border border-[#7f8790] bg-white px-0.5">
              <li className="leading-4">
                D:₩PrincePE_sgd3 (<K>서기다님</K>)(2020-04-04)₩WinNTSetup.ico
              </li>
            </ul>
            <div className="flex w-[110px] shrink-0 flex-col gap-2 pt-px">
              <button className={clsx(btn, 'h-6 border-[#2f86b5] text-[13px] inset-shadow-[0_0_0_2px_#55d0f5]')}>추가...</button>
              <button className={clsx(btn, 'h-6 text-[13px]')}>제거</button>
              <button className={clsx(btn, 'h-6 text-[13px]')}>지우기</button>
              <div className="pl-6 text-center text-[13px] leading-4">파일 수</div>
              <div className="-mt-2 pl-3 text-center leading-[18px]">1</div>
            </div>
          </div>
        </Group>

        <Group title={<K>이미지 형식</K>}>
          <div className="flex pt-0.5">
            <FormatGrid />
            <button aria-label="다음 크기" className="flex-1 self-start pr-2 text-center text-xs leading-4 font-bold">&gt;</button>
            <div className="flex w-[110px] shrink-0 flex-col">
              <button className={clsx(btn, 'h-[22px] text-[13px]')}>지우기</button>
              <button className={clsx(btn, 'h-[22px]')}><span>Windows <K>아이콘</K></span></button>
              <button className={clsx(btn, 'h-[22px]')}><span>Macintosh <K>아이콘</K></span></button>
              <button className={clsx(btn, 'h-[22px]')}><span>Windows <K>커서</K></span></button>
            </div>
          </div>
          <div className="mt-1 flex h-6 items-start">
            <div className="w-[197px] pt-0.5"><Check id="sharpen"><K>크기 조정 후 선명하게</K></Check></div>
            <div className="w-[76px]">
              <input
                type="range"
                aria-label="선명도"
                disabled
                defaultValue={0}
                className={clsx('block h-4 w-full appearance-none border-t border-[#a5a5a5] bg-[#e4e8ea]', thumb, '[&::-webkit-slider-thumb]:mt-0')}
              />
              <div className="mt-1 flex justify-between px-[3px]">
                <span className="h-[3px] w-px bg-gray-400" />
                <span className="h-[3px] w-px bg-gray-400" />
                <span className="h-[3px] w-px bg-gray-400" />
              </div>
            </div>
          </div>
        </Group>

        <Group title="Merge Image">
          <div className="flex flex-col gap-[7px] pt-px pb-[5px]">
            <MergeRow name="Background" />
            <MergeRow name="Foreground" />
          </div>
        </Group>

        <Group title={<K>출력</K>}>
          <div className="flex flex-col gap-[7px] pb-[5px] text-[13px]">
            <div className="flex h-[23px] items-center">
              <label htmlFor="out-dir" className="w-[119px] shrink-0">출력 폴더</label>
              <input id="out-dir" defaultValue="D:₩" className={clsx(field, 'mr-[7px] border-[#dfe5ea] border-t-[#a9adb3]')} />
              <button aria-label="폴더 찾기" className={clsx(btn, 'h-[23px] w-[22px] text-[11px]')}>...</button>
            </div>
            <div className="flex h-[22px] items-center">
              <label htmlFor="out-type" className="w-[119px] shrink-0">파일 형식</label>
              <Select id="out-type" value="Windows 아이콘 (*.ico)" className="flex-1" />
            </div>
          </div>
        </Group>
      </div>
      <div className="flex h-10 items-center justify-end gap-2 border-t border-[#a0a0a0] pr-[9px] text-[13px]">
        <button className={clsx(btn, 'h-6 w-[74px]')}>확인</button>
        <button className={clsx(btn, 'h-6 w-[74px]')}>취소</button>
      </div>
    </div>

    {/* hand-drawn highlights */}
    <div className={clsx(mark, 'top-[45px] right-[19px] h-8 w-[116px]')} />
    <div className={clsx(mark, 'top-[217px] left-[15px] h-[116px] w-[257px]')} />
    <div className={clsx(mark, 'right-[83px] bottom-1 h-[43px] w-[124px]')} />
  </div>
);

/* ---------- status bar + page ---------- */

const StatusBar = () => (
  <footer className="flex h-[19px] shrink-0 items-center border-t border-[#9a9a9a] bg-[#f0edec]">
    <div className="flex h-full w-[75px] items-center border-r border-[#ccc]">
      <Svg size={12}><path d="M8 1v14M1 8h14" stroke="#888" strokeWidth="1.300" /></Svg>
    </div>
    <div className="flex h-full w-[75px] items-center border-r border-[#ccc] pl-1"><FaAnchor size={10} color="#888" /></div>
    <div className="flex h-full w-[75px] items-center border-r border-[#ccc] pl-1">
      <Svg size={11}>
        <path d="M1 16V1h14" stroke="#888" strokeWidth="1.500" />
        <path d="M15 4v11H4" stroke="#888" strokeWidth="1.500" strokeDasharray="2 2" />
      </Svg>
    </div>
    <Svg size={10} className="mt-1.5 ml-auto">
      <path d="M11 1h3v3h-3zM6 6h3v3H6zM11 6h3v3h-3zM1 11h3v3H1zM6 11h3v3H6zM11 11h3v3h-3z" fill="#bbb" />
    </Svg>
  </footer>
);

const App: React.FC = () => (
  <div className="relative h-screen min-h-[740px] overflow-hidden rounded-lg border border-[#14365f] bg-[linear-gradient(90deg,#2f6cb9,#1f78d2_30%,#2b8edd_60%,#4a90d8)] font-[Roboto,'Noto_Sans_CJK_KR',sans-serif] text-black">
    {/* frame tint below the caption */}
    <div className="absolute inset-x-0 top-7 bottom-0 flex justify-between">
      <div className="w-1/2 bg-[linear-gradient(#2b6dc0,#5aa5f0_15%,#3a86dd_25%,#3fc6ff_55%,#6ff2ff)]" />
      <div className="w-1/2 bg-[linear-gradient(#3f8ddb,#3b99ee_24%,#58a06c_27%,#d5f6ee_32%,#3a9ff3_38%,#3ba5f7)]" />
    </div>
    <div className="absolute inset-x-0 bottom-0 h-2 bg-[linear-gradient(90deg,#6ff2ff,#a4f6f4_20%,#5fd8ff_60%,#3ba5f7)]" />
    <div className="relative flex h-full flex-col px-[7px] pb-[7px]">
      <TitleBar />
      <div className="flex min-h-0 flex-1 flex-col border-b border-[#2a6a9a]">
        <MenuAndToolbar />
        <OptionsBar />
        <main className="flex min-h-0 flex-1 bg-[#a9a9a9]">
          <ToolStrip />
          <aside className="ml-auto flex w-[224px] shrink-0 flex-col overflow-hidden border-l-4 border-[#cdcdcd] bg-[#f0f0f0]">
            <PreviewPanel />
            <ColorPanel />
            <BrushPanel />
            <LayerPanel />
          </aside>
        </main>
        <StatusBar />
      </div>
    </div>
    <BatchDialog />
  </div>
);

export default App;
